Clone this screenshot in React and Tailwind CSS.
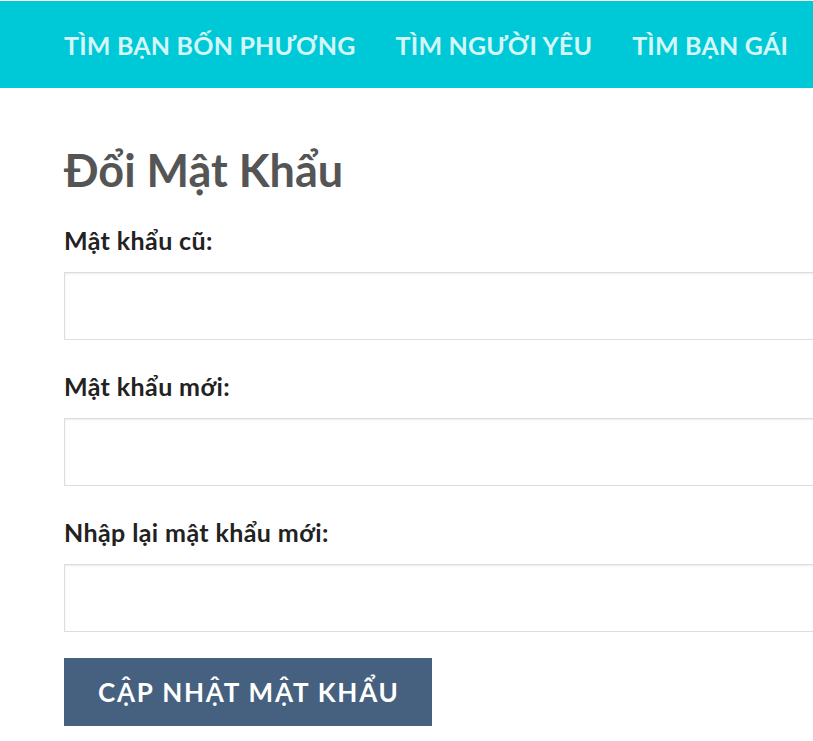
export default function App() {
  const font = { fontFamily: "Lato, 'Noto Sans', sans-serif" };
  const fields = ["Mật khẩu cũ:", "Mật khẩu mới:", "Nhập lại mật khẩu mới:"];
  return (
    <div className="w-[813px] h-[741px] overflow-hidden bg-white" style={font}>
      <div className="mt-px h-[87px] bg-[#00c9d7] flex items-center pl-16 gap-10 whitespace-nowrap">
        <span className="text-[25px] leading-[30px] font-bold text-[#d4f6f9] tracking-[0.2px]">TÌM BẠN BỐN PHƯƠNG</span>
        <span className="text-[25px] leading-[30px] font-bold text-[#d4f6f9] tracking-[0.2px]">TÌM NGƯỜI YÊU</span>
        <span className="text-[25px] leading-[30px] font-bold text-[#d4f6f9] tracking-[0.2px]">TÌM BẠN GÁI</span>
      </div>
      <div className="pl-16 pt-[55px]">
        <h1 className="text-[45px] font-bold text-[#555] leading-[54px]">Đổi Mật Khẩu</h1>
        <div className="mt-[28px] flex flex-col gap-[31px]">
          {fields.map((f) => (
            <div key={f} className="flex flex-col">
              <label className="text-[25px] font-bold text-[#222] leading-[30px] tracking-[0.4px]">{f}</label>
              <div className="mt-[17px] h-[68px] w-[800px] border border-[#ddd] shadow-[inset_0_1px_2px_rgba(0,0,0,0.08)] bg-white"></div>
            </div>
          ))}
        </div>
        <button className="mt-[26px] h-[68px] pl-[34px] pr-[32px] bg-[#46607f] text-white text-[26px] leading-[31px] font-bold tracking-[1.8px]">CẬP NHẬT MẬT KHẨU</button>
      </div>
    </div>
  );
}
